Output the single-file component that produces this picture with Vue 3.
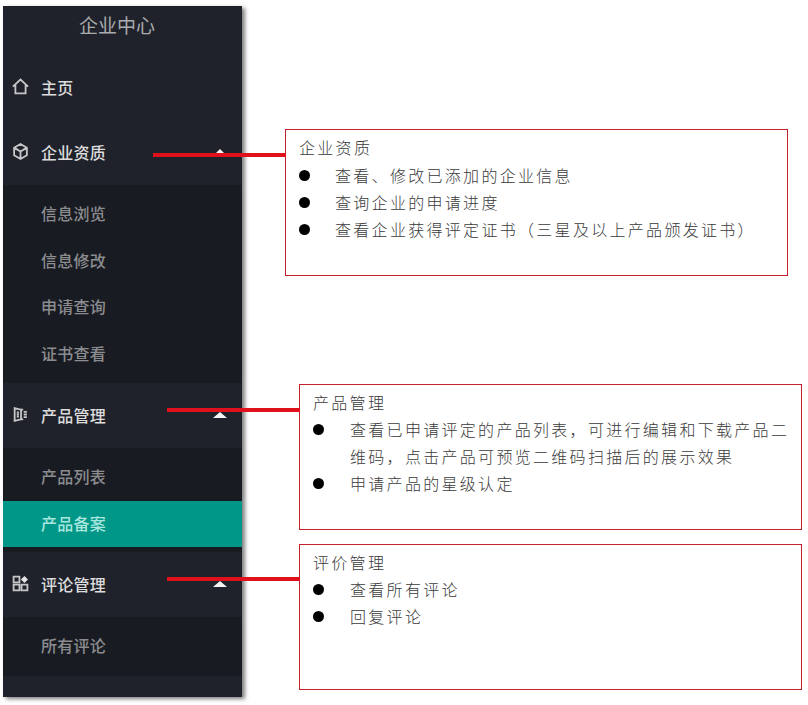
<template>
  <div class="page">
    <aside class="sidebar">
      <div class="logo">企业中心</div>
      <div class="home-row">
        <svg class="icon" viewBox="0 0 16 16"><path d="M.8 8.2 8 1.5l7.2 6.7M3.2 6.5v8h9.6v-8" /></svg>
        <span>主页</span>
      </div>
      <template v-for="group in groups" :key="group.title">
        <div class="group-row">
          <svg class="icon" viewBox="0 0 16 16" v-html="group.icon"></svg>
          <span>{{ group.title }}</span>
          <i class="caret" :class="{ small: group.smallCaret }"></i>
        </div>
        <ul class="sub-list" :class="group.listClass">
          <li v-for="item in group.items" :key="item" :class="{ active: item === activeItem }">{{ item }}</li>
        </ul>
      </template>
    </aside>

    <main class="notes">
      <section v-for="note in notes" :key="note.title" class="note" :class="note.cls">
        <span class="connector"></span>
        <h3>{{ note.title }}</h3>
        <ul>
          <li v-for="line in note.lines" :key="line">{{ line }}</li>
        </ul>
      </section>
    </main>
  </div>
</template>

<script setup>
const activeItem = '产品备案'

const groups = [
  {
    title: '企业资质',
    smallCaret: true,
    listClass: 'list-a',
    icon: '<path d="M8 1 14 4.4v7.2L8 15l-6-3.4V4.4zM2.4 4.6 8 8l5.6-3.4M8 8v6.6" />',
    items: ['信息浏览', '信息修改', '申请查询', '证书查看']
  },
  {
    title: '产品管理',
    listClass: 'list-b',
    icon: '<path d="M2.5 2 8.5 3.5v9L2.5 14zM4.5 6h2M4.5 8h2M4.5 10h2M8.5 3.5h2M8.5 12.5h2M11 5.5h3M11 8h3M11 10.5h3" />',
    items: ['产品列表', '产品备案']
  },
  {
    title: '评论管理',
    listClass: 'list-c',
    icon: '<path d="M1.5 1.5h5.5v5.5H1.5zM1.5 9h5.5v5.5H1.5zM9 9h5.5v5.5H9z" /><path class="fill" d="M11.7 1 15 4.3l-3.3 3.3-3.3-3.3z" />',
    items: ['所有评论']
  }
]

const notes = [
  {
    title: '企业资质',
    cls: 'note-a',
    lines: ['查看、修改已添加的企业信息', '查询企业的申请进度', '查看企业获得评定证书（三星及以上产品颁发证书）']
  },
  {
    title: '产品管理',
    cls: 'note-b',
    lines: ['查看已申请评定的产品列表，可进行编辑和下载产品二维码，点击产品可预览二维码扫描后的展示效果', '申请产品的星级认定']
  },
  {
    title: '评价管理',
    cls: 'note-c',
    lines: ['查看所有评论', '回复评论']
  }
]
</script>

<style>
html,
body {
  margin: 0;
  background: #fff;
}
</style>

<style scoped>
.page {
  width: 808px;
  height: 705px;
  overflow: hidden;
  display: flex;
  align-items: flex-start;
  font-family: "Noto Sans CJK SC", "Liberation Sans", sans-serif;
}
.sidebar {
  width: 239px;
  height: 691px;
  margin: 6px 0 0 3px;
  flex-shrink: 0;
  background: #20222b;
  box-shadow: 3px 2px 4px rgba(60, 60, 60, 0.65);
  color: #d9d9d9;
  font-size: 16px;
  letter-spacing: 0.25px;
}
.logo {
  height: 39px;
  line-height: 38px;
  padding-right: 11px;
  text-align: center;
  font-size: 19px;
  letter-spacing: 0;
  color: #a9abae;
}
.home-row,
.group-row {
  height: 65px;
  display: flex;
  align-items: center;
  box-sizing: border-box;
  padding: 0 0 2px 9px;
  font-weight: 500;
  color: #dcdcdc;
}
.home-row {
  height: 75px;
  padding-top: 8px;
  padding-bottom: 0;
}
.icon {
  width: 17px;
  height: 17px;
  margin-right: 12px;
  fill: none;
  stroke: #c6c6c8;
  stroke-width: 1.7;
  flex-shrink: 0;
}
.icon :deep(.fill) {
  fill: #e4e4e4;
  stroke: none;
}
.caret {
  margin-left: auto;
  margin-right: 15px;
  width: 0;
  height: 0;
  border-left: 7px solid transparent;
  border-right: 7px solid transparent;
  border-bottom: 6px solid #f4f4f4;
}
.caret.small {
  margin-right: 17px;
  border-left-width: 5px;
  border-right-width: 5px;
  border-bottom-width: 5px;
}
.sub-list {
  list-style: none;
  margin: 0;
  padding: 6px 0 6px;
  background: #191b22;
  color: #8b8c8f;
  font-weight: 500;
}
.sub-list li {
  height: 46.5px;
  line-height: 44.5px;
  padding-left: 38px;
}
.sub-list li.active {
  background: #009688;
  color: #a9e6de;
}
.list-b {
  padding: 6px 0 5px;
}
.list-c {
  padding: 6px 0;
}
.notes {
  flex: 1;
  display: flex;
  flex-direction: column;
}
.note {
  position: relative;
  box-sizing: border-box;
  width: 503px;
  height: 146px;
  margin-left: 57px;
  border: 1px solid #c4202c;
  padding: 4px 8px 0 13px;
  color: #3a3a3a;
  font-size: 16px;
  line-height: 27px;
  letter-spacing: 2.3px;
  font-weight: 300;
}
.note-a {
  height: 147px;
  margin-top: 129px;
  margin-left: 43px;
  padding: 5px 8px 0 13px;
}
.note-b {
  margin-top: 108px;
}
.note-c {
  margin-top: 14px;
}
.note h3 {
  margin: 0;
  font: inherit;
}
.note-a h3 {
  margin: -1px 0 1px;
}
.note ul {
  list-style: none;
  margin: 0;
  padding: 0 0 0 37px;
}
.note-a ul {
  padding-left: 36px;
}
.note li {
  position: relative;
}
.note li::before {
  content: "";
  position: absolute;
  left: -37px;
  top: 8px;
  width: 11px;
  height: 11px;
  border-radius: 50%;
  background: #000;
}
.note-a li::before {
  left: -36px;
}
.connector {
  position: absolute;
  right: 100%;
  top: 23px;
  width: 133px;
  height: 4px;
  background: #e0101c;
}
.note-c .connector {
  top: 32px;
}
</style>
